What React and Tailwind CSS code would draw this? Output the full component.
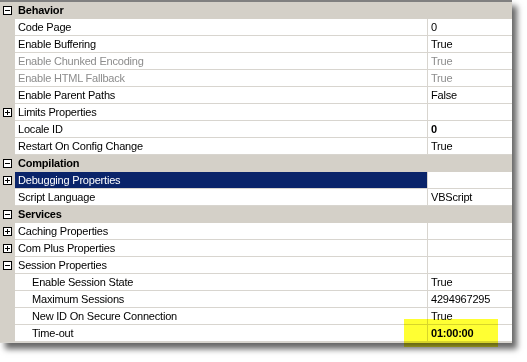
import React from "react";

const rows = [
  { type: "header", name: "Behavior" },
  { name: "Code Page", value: "0" },
  { name: "Enable Buffering", value: "True" },
  { name: "Enable Chunked Encoding", value: "True", disabled: true },
  { name: "Enable HTML Fallback", value: "True", disabled: true },
  { name: "Enable Parent Paths", value: "False" },
  { name: "Limits Properties", value: "", box: "plus" },
  { name: "Locale ID", value: "0", bold: true },
  { name: "Restart On Config Change", value: "True" },
  { type: "header", name: "Compilation" },
  { name: "Debugging Properties", value: "", box: "plus", selected: true },
  { name: "Script Language", value: "VBScript" },
  { type: "header", name: "Services" },
  { name: "Caching Properties", value: "", box: "plus" },
  { name: "Com Plus Properties", value: "", box: "plus" },
  { name: "Session Properties", value: "", box: "minus" },
  { name: "Enable Session State", value: "True", indent: true },
  { name: "Maximum Sessions", value: "4294967295", indent: true },
  { name: "New ID On Secure Connection", value: "True", indent: true },
  { name: "Time-out", value: "01:00:00", indent: true, bold: true },
];

function Box({ kind }) {
  return (
    <svg width="9" height="9" viewBox="0 0 9 9" className="block">
      <rect x="0.5" y="0.5" width="8" height="8" fill="white" stroke="black" />
      <line x1="2" y1="4.5" x2="7" y2="4.5" stroke="black" />
      {kind === "plus" && <line x1="4.5" y1="2" x2="4.5" y2="7" stroke="black" />}
    </svg>
  );
}

function Row({ r }) {
  if (r.type === "header") {
    return (
      <div className="flex h-[17px] bg-[#d4d0c8] items-center">
        <div className="w-[15px] flex justify-start pl-[3px]">
          <Box kind="minus" />
        </div>
        <div className="pl-[3px] font-bold text-black">{r.name}</div>
      </div>
    );
  }
  return (
    <div className="flex h-[17px]">
      <div className="w-[15px] shrink-0 bg-[#d4d0c8] flex items-center pl-[3px]">
        {r.box && <Box kind={r.box} />}
      </div>
      <div
        className={
          "w-[413px] shrink-0 border-b border-r border-[#d8d5cf] flex items-center whitespace-nowrap " +
          (r.indent ? "pl-[17px] " : "pl-[3px] ") +
          (r.selected ? "bg-[#0a246a] text-white " : "bg-white ") +
          (r.disabled ? "text-[#8c8c8c]" : r.selected ? "" : "text-black")
        }
      >
        {r.name}
      </div>
      <div
        className={
          "w-[84px] shrink-0 border-b border-[#d8d5cf] bg-white flex items-center pl-[3px] whitespace-nowrap " +
          (r.disabled ? "text-[#8c8c8c] " : "text-black ") +
          (r.bold ? "font-bold" : "")
        }
      >
        {r.value}
      </div>
    </div>
  );
}

export default function App() {
  return (
    <div
      className="relative w-[527px] h-[362px] bg-white overflow-hidden text-[11px] leading-none tracking-[-0.2px]"
      style={{ fontFamily: '"Liberation Sans", Arial, sans-serif' }}
    >
      <div className="w-[512px] border-t-2 border-b border-[#808080] border-b-[#d8d5cf] bg-white shadow-[5px_6px_6px_rgba(0,0,0,0.6)]">
        {rows.map((r, i) => (
          <Row key={i} r={r} />
        ))}
      </div>
      <div className="absolute left-[404px] top-[319px] w-[94px] h-[28px] bg-[#ffff33] mix-blend-multiply" />
    </div>
  );
}
